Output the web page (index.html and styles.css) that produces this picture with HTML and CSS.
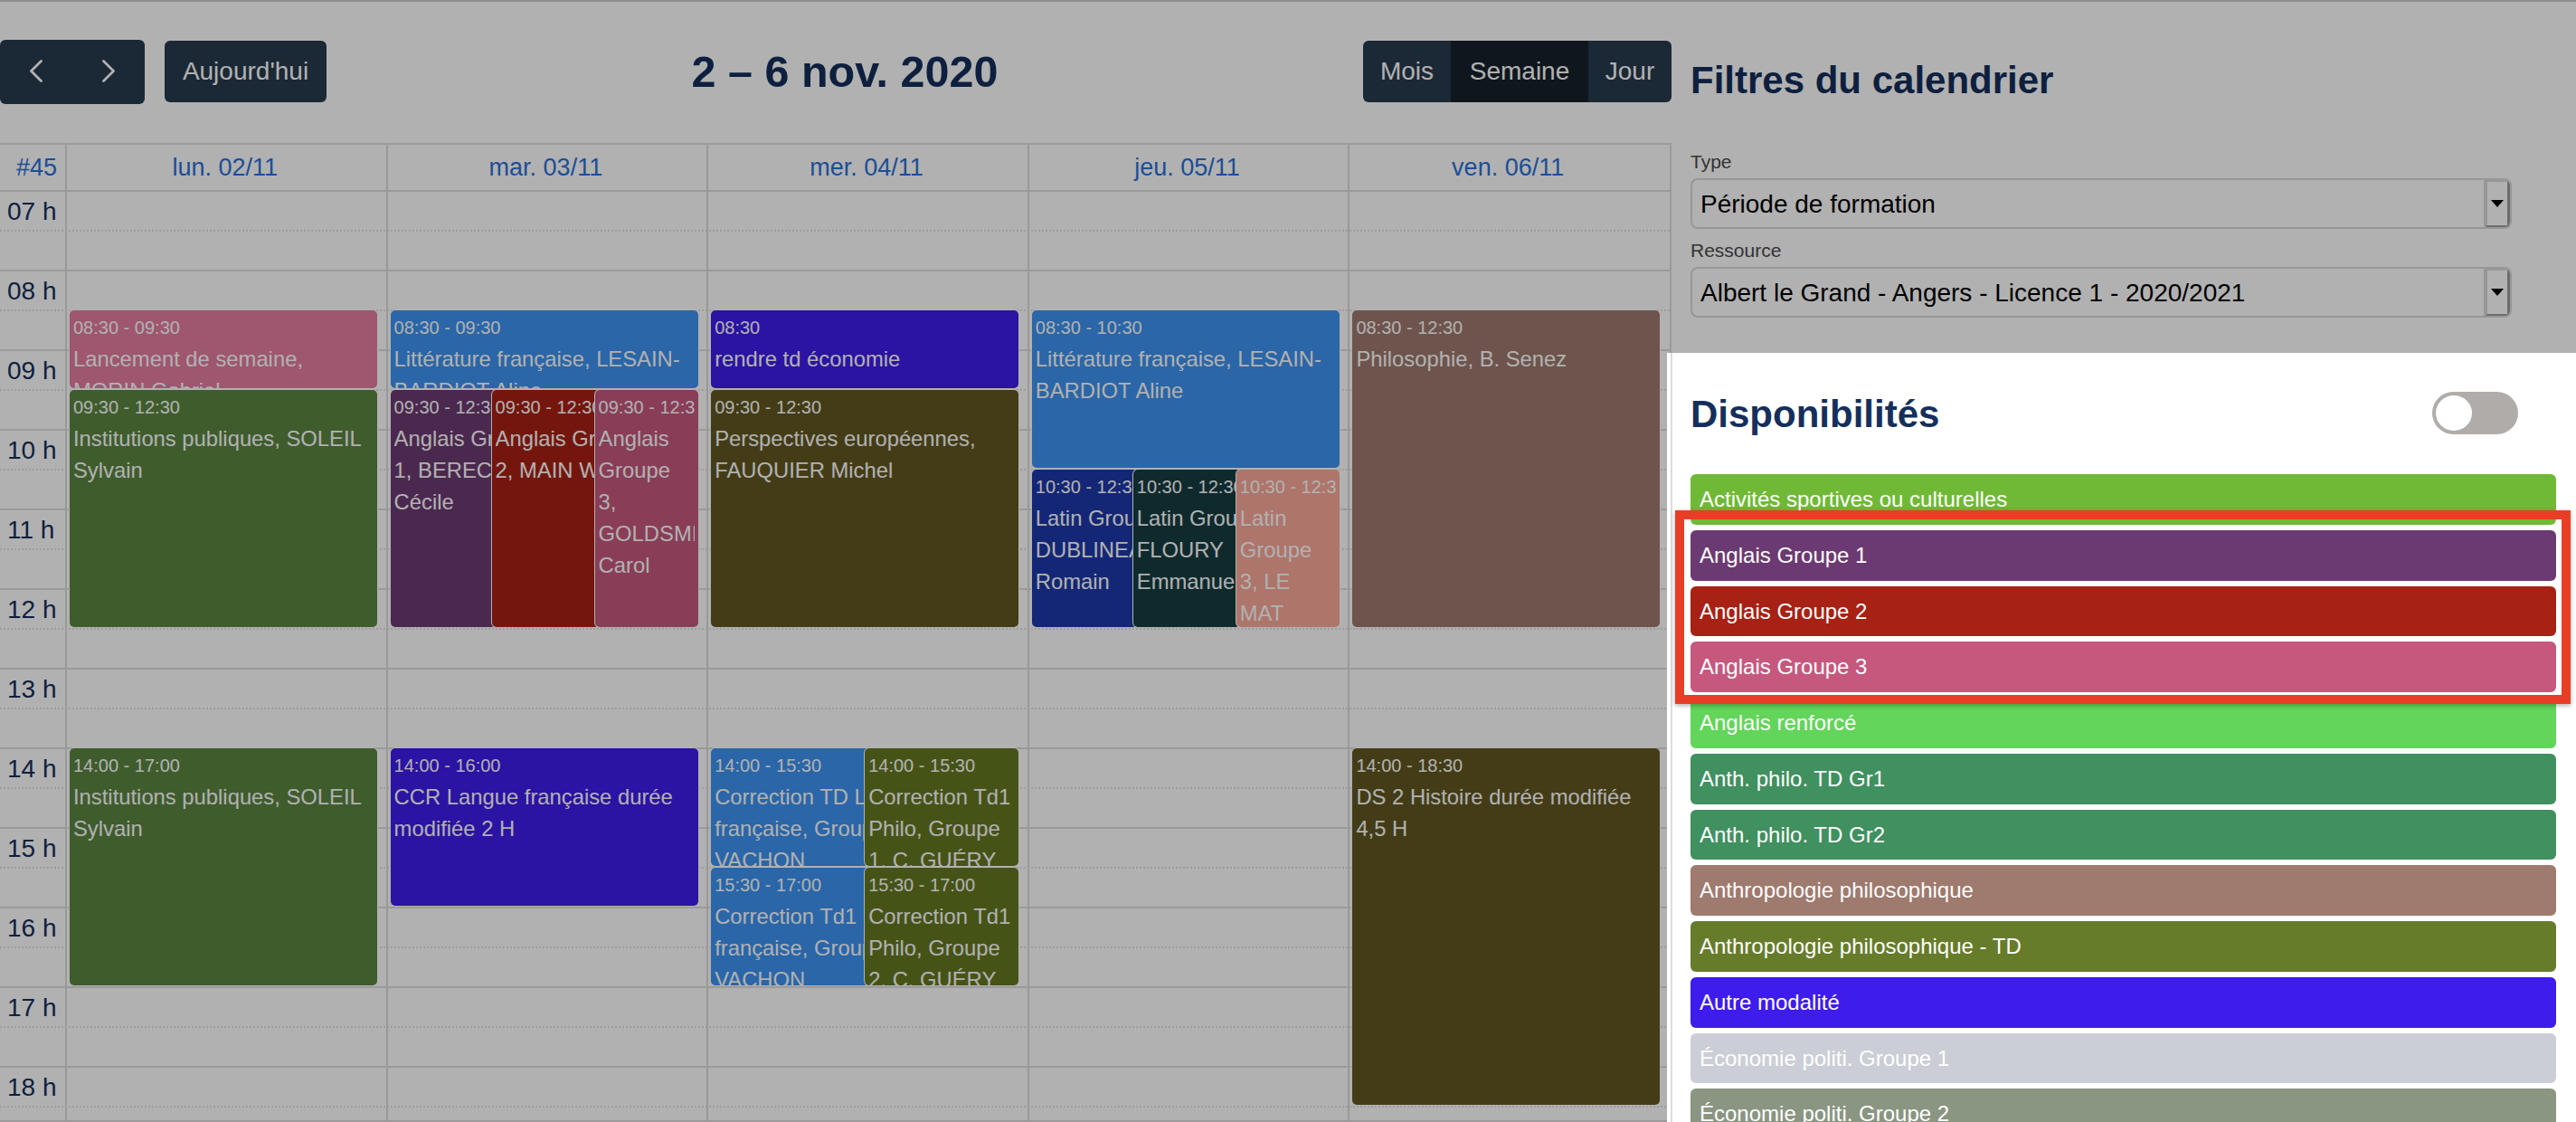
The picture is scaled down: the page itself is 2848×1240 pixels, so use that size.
FILE: index.html
```html
<!DOCTYPE html>
<html lang="fr">
<head>
    <meta charset="UTF-8">
    <title>Calendrier</title>
    <link rel="stylesheet" href="styles.css">
</head>
<body>
    <div class="page">
        <div class="calendar">
            <div class="toolbar">
                <div class="nav-group">
                    <button class="btn btn-nav"><svg width="14" height="25" viewBox="0 0 14 25"><path d="M12.5 1.5 1.5 12.5l11 11" fill="none" stroke="#fff" stroke-width="2.8" stroke-linecap="round"/></svg></button>
                    <button class="btn btn-nav"><svg width="14" height="25" viewBox="0 0 14 25"><path d="m1.500 1.500 11 11-11 11" fill="none" stroke="#fff" stroke-width="2.800" stroke-linecap="round"/></svg></button>
                </div>
                <button class="btn btn-today">Aujourd'hui</button>
                <h1 class="cal-title">2 – 6 nov. 2020</h1>
                <div class="view-group">
                    <button class="btn btn-mois">Mois</button>
                    <button class="btn btn-semaine">Semaine</button>
                    <button class="btn btn-jour">Jour</button>
                </div>
            </div>

            <div class="week-head">
                <div class="week-num">#45</div>
                <div class="day-name">lun. 02/11</div>
                <div class="day-name">mar. 03/11</div>
                <div class="day-name">mer. 04/11</div>
                <div class="day-name">jeu. 05/11</div>
                <div class="day-name">ven. 06/11</div>
            </div>

            <div class="time-grid">
                <div class="hour">07 h</div>
                <div class="hour">08 h</div>
                <div class="hour">09 h</div>
                <div class="hour">10 h</div>
                <div class="hour">11 h</div>
                <div class="hour">12 h</div>
                <div class="hour">13 h</div>
                <div class="hour">14 h</div>
                <div class="hour">15 h</div>
                <div class="hour">16 h</div>
                <div class="hour">17 h</div>
                <div class="hour">18 h</div>

                <div class="days">
                    <div class="day">
                        <div class="event c-pink-light" style="top: 133px; height: 86px"><div class="event-in"><div class="event-time">08:30 - 09:30</div><div class="event-title">Lancement de semaine, MORIN Gabriel</div></div></div>
                        <div class="event c-green-dark" style="top: 221px; height: 262px"><div class="event-in"><div class="event-time">09:30 - 12:30</div><div class="event-title">Institutions publiques, SOLEIL Sylvain</div></div></div>
                        <div class="event c-green-dark" style="top: 617px; height: 262px"><div class="event-in"><div class="event-time">14:00 - 17:00</div><div class="event-title">Institutions publiques, SOLEIL Sylvain</div></div></div>
                    </div>
                    <div class="day">
                        <div class="event c-blue" style="top: 133px; height: 86px"><div class="event-in"><div class="event-time">08:30 - 09:30</div><div class="event-title">Littérature française, LESAIN-BARDIOT Aline</div></div></div>
                        <div class="event c-purple third-1" style="top: 221px; height: 262px"><div class="event-in"><div class="event-time">09:30 - 12:30</div><div class="event-title">Anglais Groupe 1, BERECQ Cécile</div></div></div>
                        <div class="event c-red third-2" style="top: 221px; height: 262px"><div class="event-in"><div class="event-time">09:30 - 12:30</div><div class="event-title">Anglais Groupe 2, MAIN W.</div></div></div>
                        <div class="event c-pink third-3" style="top: 221px; height: 262px"><div class="event-in"><div class="event-time">09:30 - 12:30</div><div class="event-title">Anglais Groupe 3, GOLDSMITH Carol</div></div></div>
                        <div class="event c-indigo" style="top: 617px; height: 174px"><div class="event-in"><div class="event-time">14:00 - 16:00</div><div class="event-title">CCR Langue française durée modifiée 2 H</div></div></div>
                    </div>
                    <div class="day">
                        <div class="event c-indigo" style="top: 133px; height: 86px"><div class="event-in"><div class="event-time">08:30</div><div class="event-title">rendre td économie</div></div></div>
                        <div class="event c-olive" style="top: 221px; height: 262px"><div class="event-in"><div class="event-time">09:30 - 12:30</div><div class="event-title">Perspectives européennes, FAUQUIER Michel</div></div></div>
                        <div class="event c-blue half-1" style="top: 617px; height: 130px"><div class="event-in"><div class="event-time">14:00 - 15:30</div><div class="event-title">Correction TD Littérature française, Groupe 1, VACHON</div></div></div>
                        <div class="event c-moss half-2" style="top: 617px; height: 130px"><div class="event-in"><div class="event-time">14:00 - 15:30</div><div class="event-title">Correction Td1 Philo, Groupe 1, C. GUÉRY</div></div></div>
                        <div class="event c-blue half-1" style="top: 749px; height: 130px"><div class="event-in"><div class="event-time">15:30 - 17:00</div><div class="event-title">Correction Td1 Littérature française, Groupe 2, VACHON</div></div></div>
                        <div class="event c-moss half-2" style="top: 749px; height: 130px"><div class="event-in"><div class="event-time">15:30 - 17:00</div><div class="event-title">Correction Td1 Philo, Groupe 2, C. GUÉRY</div></div></div>
                    </div>
                    <div class="day">
                        <div class="event c-blue" style="top: 133px; height: 174px"><div class="event-in"><div class="event-time">08:30 - 10:30</div><div class="event-title">Littérature française, LESAIN-BARDIOT Aline</div></div></div>
                        <div class="event c-navy third-1" style="top: 309px; height: 174px"><div class="event-in"><div class="event-time">10:30 - 12:30</div><div class="event-title">Latin Groupe 1, DUBLINEAU Romain</div></div></div>
                        <div class="event c-teal third-2" style="top: 309px; height: 174px"><div class="event-in"><div class="event-time">10:30 - 12:30</div><div class="event-title">Latin Groupe 2, FLOURY Emmanuel</div></div></div>
                        <div class="event c-salmon third-3" style="top: 309px; height: 174px"><div class="event-in"><div class="event-time">10:30 - 12:30</div><div class="event-title">Latin Groupe 3, LE MAT</div></div></div>
                    </div>
                    <div class="day">
                        <div class="event c-brown" style="top: 133px; height: 350px"><div class="event-in"><div class="event-time">08:30 - 12:30</div><div class="event-title">Philosophie, B. Senez</div></div></div>
                        <div class="event c-olive" style="top: 617px; height: 394px"><div class="event-in"><div class="event-time">14:00 - 18:30</div><div class="event-title">DS 2 Histoire durée modifiée 4,5 H</div></div></div>
                    </div>
                </div>
            </div>
        </div>

        <div class="side">
            <h2 class="side-title">Filtres du calendrier</h2>
            <div class="filter">
                <label class="filter-label">Type</label>
                <div class="fake-select">
                    <span class="fake-value">Période de formation</span>
                    <span class="fake-arrow"></span>
                </div>
            </div>
            <div class="filter">
                <label class="filter-label">Ressource</label>
                <div class="fake-select">
                    <span class="fake-value">Albert le Grand - Angers - Licence 1 - 2020/2021</span>
                    <span class="fake-arrow"></span>
                </div>
            </div>
        </div>
    </div>

    <div class="dim"></div>

    <div class="dispo">
        <div class="dispo-in">
            <div class="dispo-head">
                <h2 class="dispo-title">Disponibilités</h2>
                <div class="switch"><div class="switch-knob"></div></div>
            </div>
            <div class="legend">
                <div class="legend-item l-lime">Activités sportives ou culturelles</div>
                <div class="legend-item c-purple">Anglais Groupe 1</div>
                <div class="legend-item c-red">Anglais Groupe 2</div>
                <div class="legend-item c-pink">Anglais Groupe 3</div>
                <div class="legend-item l-green">Anglais renforcé</div>
                <div class="legend-item l-sea">Anth. philo. TD Gr1</div>
                <div class="legend-item l-sea">Anth. philo. TD Gr2</div>
                <div class="legend-item c-brown">Anthropologie philosophique</div>
                <div class="legend-item l-khaki">Anthropologie philosophique - TD</div>
                <div class="legend-item c-indigo">Autre modalité</div>
                <div class="legend-item l-silver">Économie politi. Groupe 1</div>
                <div class="legend-item l-sage">Économie politi. Groupe 2</div>
                <div class="highlight"></div>
            </div>
        </div>
    </div>
</body>
</html>
```

FILE: styles.css
```css
* {
    box-sizing: border-box;
}
html, body {
    margin: 0;
    height: 1240px;
    overflow: hidden;
}
body {
    position: relative;
    font-family: "Liberation Sans", Arial, sans-serif;
    background-color: #fff;
}
h1, h2 {
    margin: 0;
}
.page {
    display: flex;
    height: 1240px;
    border-top: 2px solid #ccc;
    border-bottom: 2px solid #ddd;
}

/* calendar */
.calendar {
    width: 1848px;
    flex: none;
}
.toolbar {
    display: flex;
    align-items: center;
    height: 156px;
    padding-bottom: 2px;
}
.btn {
    height: 68px;
    padding: 0;
    border: none;
    color: #fff;
    font-family: inherit;
    font-size: 28px;
    background-color: #283a4e;
}
.nav-group {
    display: flex;
}
.btn-nav {
    width: 80px;
    height: 71px;
    padding-top: 6px;
}
.btn-nav:first-child {
    border-radius: 6px 0 0 6px;
}
.btn-nav:last-child {
    border-radius: 0 6px 6px 0;
}
.btn-today {
    width: 179px;
    margin-left: 22px;
    border-radius: 6px;
}
.cal-title {
    flex: 1;
    text-align: center;
    font-size: 48.5px;
    color: #152f5c;
}
.view-group {
    display: flex;
}
.btn-mois {
    width: 97px;
    border-radius: 6px 0 0 6px;
}
.btn-semaine {
    width: 152px;
    background-color: #16212b;
}
.btn-jour {
    width: 92px;
    border-radius: 0 6px 6px 0;
}

.week-head {
    display: grid;
    grid-template-columns: 72px repeat(5, 354.6px);
    height: 52px;
    border-top: 2px solid #e0e0e0;
    border-right: 2px solid #e0e0e0;
    color: #2a71d9;
    font-size: 27px;
}
.week-num {
    padding-right: 9px;
    text-align: right;
    line-height: 50px;
}
.day-name {
    padding-right: 3px;
    border-left: 2px solid #ddd;
    text-align: center;
    line-height: 50px;
}

.time-grid {
    position: relative;
    border-right: 2px solid #e0e0e0;
}
.hour {
    position: relative;
    height: 88px;
    padding-right: 9px;
    border-top: 2px solid #dedede;
    width: 100%;
    color: #152f5c;
    font-size: 28px;
    line-height: 44px;
    text-indent: 8px;
}
.hour::after {
    content: "";
    position: absolute;
    left: 0;
    right: 0;
    top: 42px;
    border-top: 2px dotted #e2e2e2;
}
.days {
    position: absolute;
    top: 0;
    left: 72px;
    bottom: 0;
    display: grid;
    grid-template-columns: repeat(5, 354.6px);
}
.day {
    position: relative;
    border-left: 2px solid #ddd;
}

.event {
    position: absolute;
    left: 3px;
    width: 340px;
    border-radius: 5px;
    color: #fff;
    box-shadow: 0 0 0 1px #fff;
}
.event-in {
    height: 100%;
    margin: 0 4px;
    padding-bottom: 2px;
    overflow: hidden;
    background-clip: content-box;
}
.event-time {
    height: 36px;
    padding-top: 1px;
    font-size: 20px;
    line-height: 36px;
    white-space: nowrap;
}
.event-title {
    font-size: 23.8px;
    line-height: 35px;
}
.third-1 {
    width: 188px;
}
.third-2 {
    left: 115px;
    width: 188px;
}
.third-3 {
    left: 229px;
    width: 114px;
}
.third-3 .event-title {
    padding-right: 2px;
}
.half-1 {
    width: 290px;
}
.half-2 {
    left: 173px;
    width: 170px;
}

/* colours shared by events and legend */
.c-pink-light { background-color: #e67ca0; }
.c-green-dark { background-color: #5b8542; }
.c-blue { background-color: #3d94f2; }
.c-purple { background-color: #6c3a72; }
.c-red { background-color: #a72114; }
.c-pink { background-color: #c6587e; }
.c-indigo { background-color: #3e1ceb; }
.c-olive { background-color: #615720; }
.c-moss { background-color: #667822; }
.c-navy { background-color: #1e39aa; }
.c-teal { background-color: #163d42; }
.c-salmon { background-color: #fba99a; }
.c-brown { background-color: #9f7a6e; }
.l-lime { background-color: #6fb936; }
.l-green { background-color: #62d55a; }
.l-sea { background-color: #409060; }
.l-khaki { background-color: #677c2b; }
.l-silver { background-color: #cbced6; }
.l-sage { background-color: #8a9582; }

/* filters on the right */
.side {
    flex: 1;
    padding: 0 71px 0 21px;
}
.side-title {
    height: 166px;
    padding-top: 65px;
    font-size: 42px;
    line-height: 44px;
    color: #152f5c;
}
.filter-label {
    display: block;
    height: 29px;
    color: #4a4a4a;
    font-size: 21px;
    line-height: 22px;
}
.fake-select {
    display: flex;
    justify-content: space-between;
    height: 56px;
    margin-bottom: 13px;
    border: 2px solid #dadada;
    border-radius: 8px;
    overflow: hidden;
    color: #000;
    font-size: 28px;
    line-height: 54px;
}
.fake-value {
    padding-left: 9px;
}
/* old style bevelled select button */
.fake-arrow {
    display: flex;
    align-items: center;
    justify-content: center;
    width: 31px;
    margin: -2px -2px -2px 0;
    border-style: solid;
    border-width: 4px 5px 4px 4px;
    border-color: #dadada #9e9e9e #9e9e9e #dadada;
}
.fake-arrow::after {
    content: "";
    border-top: 8px solid #000;
    border-left: 7px solid transparent;
    border-right: 7px solid transparent;
}

/* grey layer over the page, the panel below stays on top */
.dim {
    position: absolute;
    top: 0;
    left: 0;
    right: 0;
    bottom: 0;
    background-color: rgba(0, 0, 0, 0.306);
}
.dispo {
    position: absolute;
    top: 390px;
    left: 1843px;
    right: 0;
    bottom: 0;
    padding-left: 4px;
    background-color: #fff;
}
.dispo-in {
    height: 100%;
    padding: 43px 22px 0 20px;
    border-left: 2px solid #ddd;
}
.dispo-head {
    display: flex;
    justify-content: space-between;
    align-items: center;
    height: 47px;
    margin-bottom: 44px;
    padding-right: 42px;
}
.dispo-title {
    padding-top: 3px;
    font-size: 42px;
    color: #152f5c;
}
.switch {
    width: 95px;
    height: 47px;
    padding: 4px 0 0 4px;
    border-radius: 24px;
    background-color: #b0aca9;
}
.switch-knob {
    width: 40px;
    height: 39px;
    border-radius: 50%;
    background-color: #fff;
}
.legend {
    position: relative;
    display: flex;
    flex-direction: column;
    gap: 6px;
}
.legend-item {
    flex: none;
    height: 55.75px;
    padding-left: 10px;
    border-radius: 6px;
    color: #fff;
    font-size: 24px;
    line-height: 55.75px;
}
.highlight {
    position: absolute;
    top: 40px;
    left: -17px;
    width: 990px;
    height: 214px;
    border: 10px solid #e93e26;
    box-shadow: 0 2px 5px rgba(0, 0, 0, 0.3);
}
```
